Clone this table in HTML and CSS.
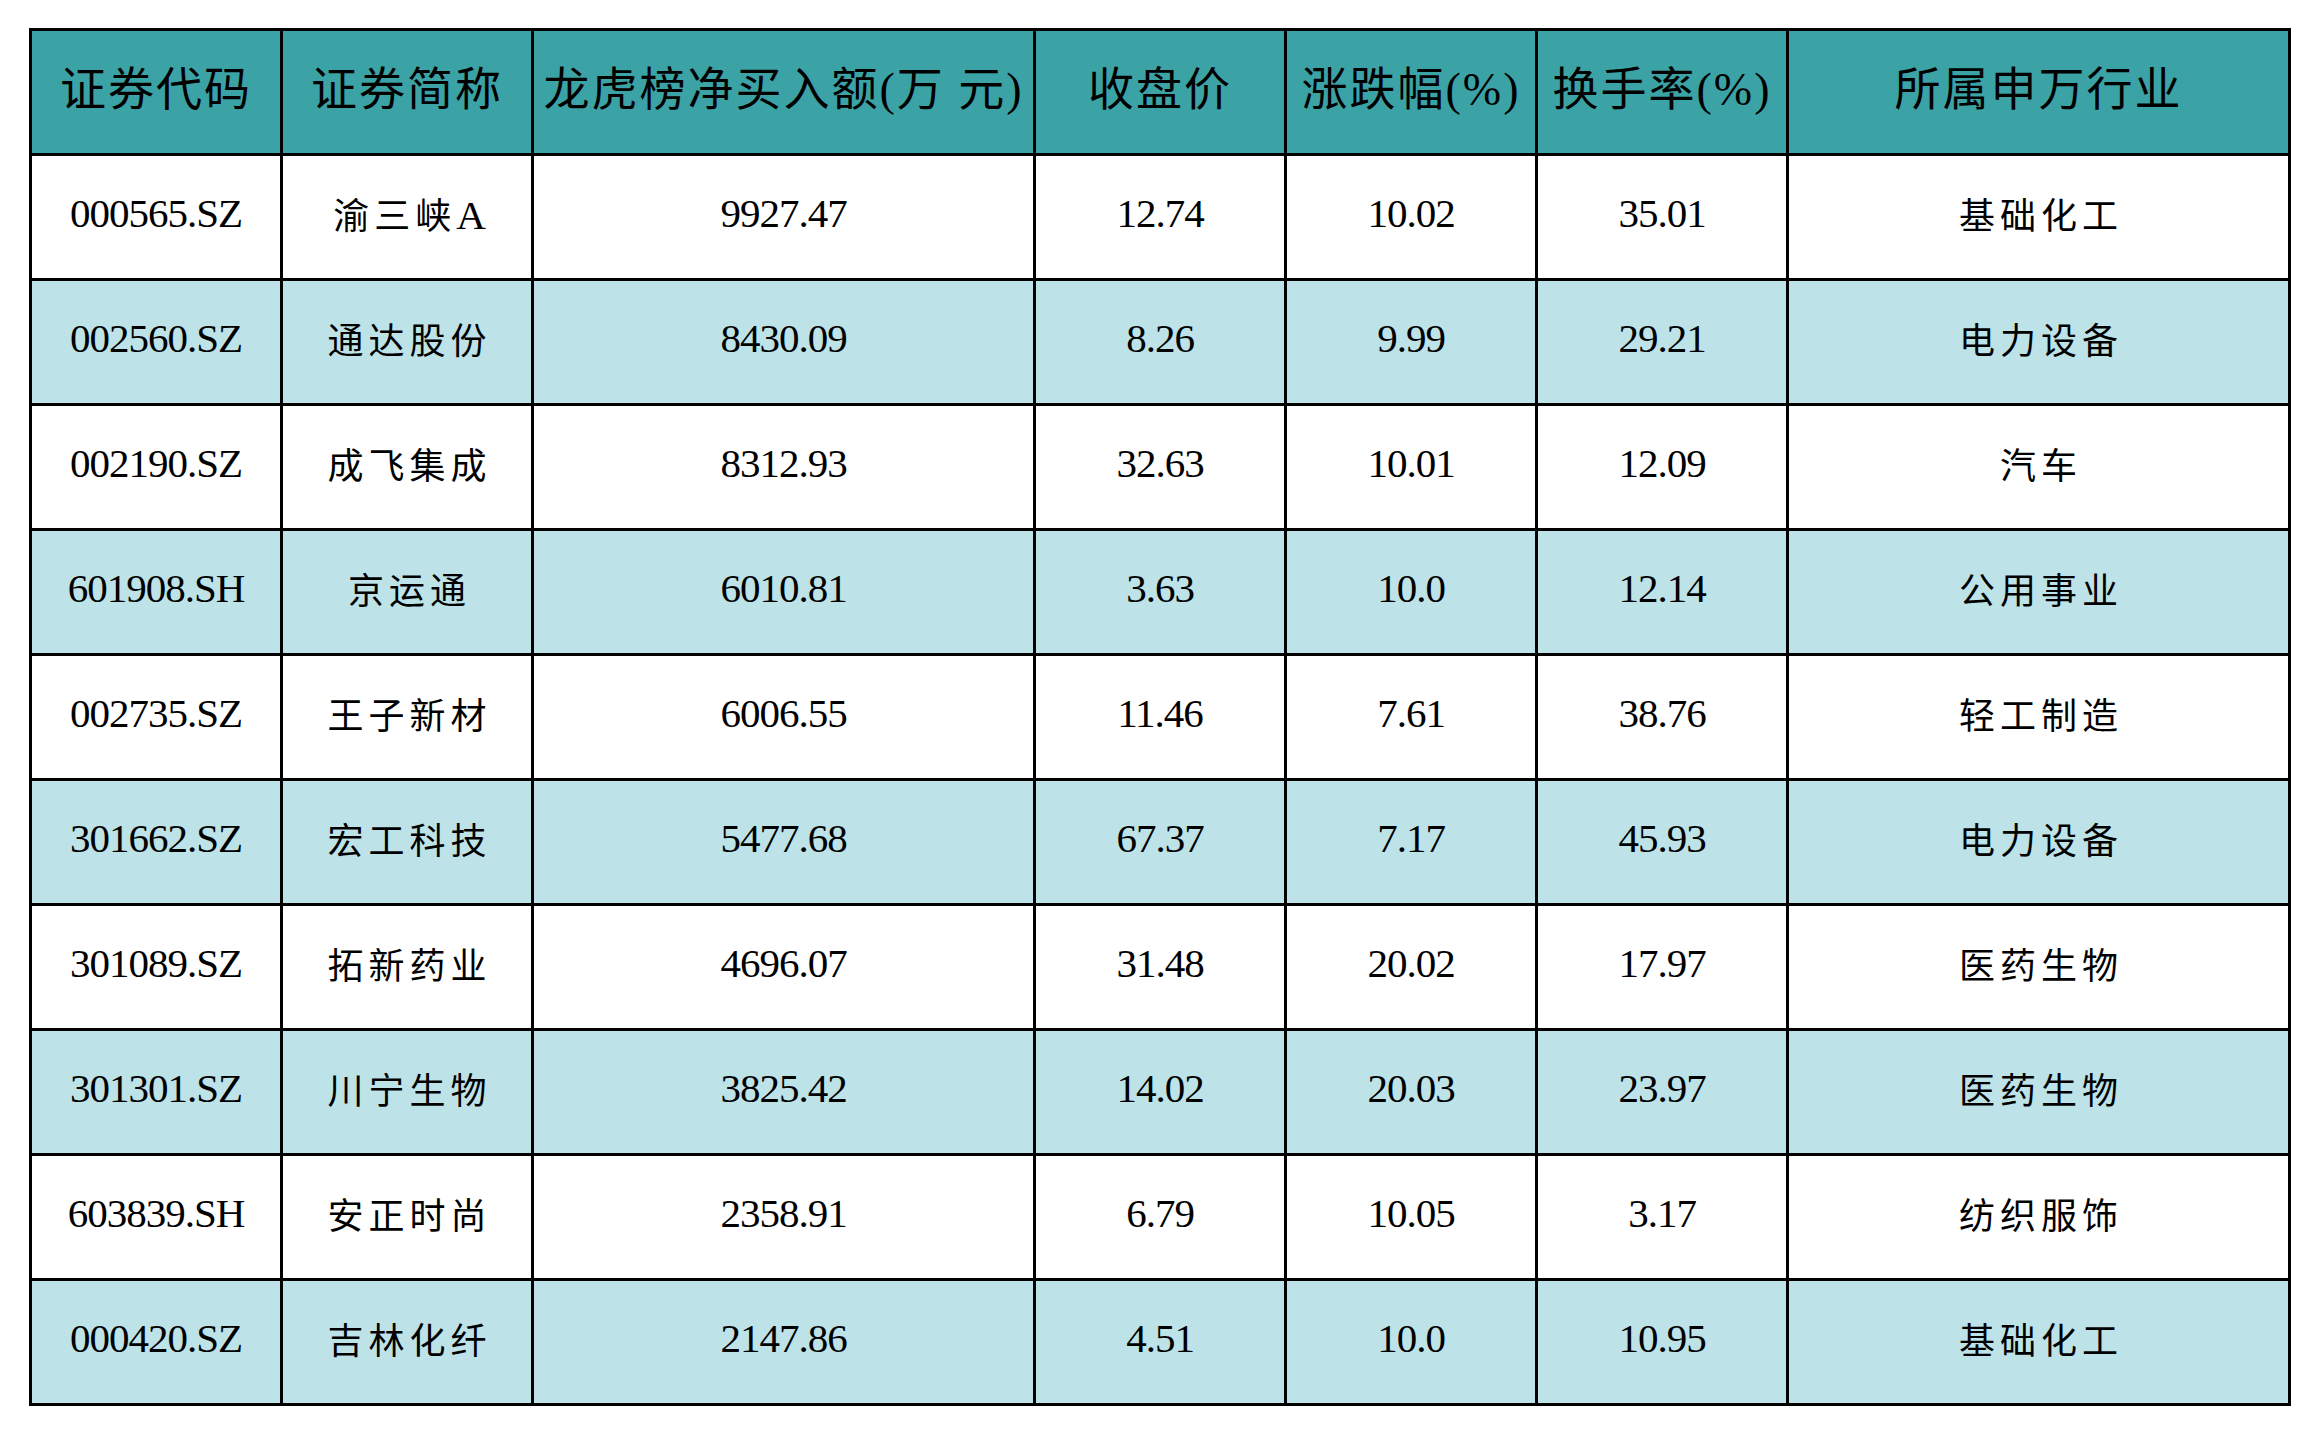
FILE: index.html
```html
<!DOCTYPE html>
<html lang="zh-CN">
<head>
<meta charset="utf-8">
<title>龙虎榜</title>
<link rel="stylesheet" href="styles.css">
</head>
<body>
<table class="grid">
  <colgroup>
    <col class="c1"><col class="c1"><col class="c2"><col class="c1"><col class="c1"><col class="c1"><col class="c2">
  </colgroup>
  <thead>
    <tr>
      <th>证券代码</th>
      <th>证券简称</th>
      <th>龙虎榜净买入额(万 元)</th>
      <th>收盘价</th>
      <th>涨跌幅(%)</th>
      <th>换手率(%)</th>
      <th>所属申万行业</th>
    </tr>
  </thead>
  <tbody>
    <tr><td>000565.SZ</td><td class="cn">渝三峡<span class="lat">A</span></td><td>9927.47</td><td>12.74</td><td>10.02</td><td>35.01</td><td class="cn">基础化工</td></tr>
    <tr class="alt"><td>002560.SZ</td><td class="cn">通达股份</td><td>8430.09</td><td>8.26</td><td>9.99</td><td>29.21</td><td class="cn">电力设备</td></tr>
    <tr><td>002190.SZ</td><td class="cn">成飞集成</td><td>8312.93</td><td>32.63</td><td>10.01</td><td>12.09</td><td class="cn">汽车</td></tr>
    <tr class="alt"><td>601908.SH</td><td class="cn">京运通</td><td>6010.81</td><td>3.63</td><td>10.0</td><td>12.14</td><td class="cn">公用事业</td></tr>
    <tr><td>002735.SZ</td><td class="cn">王子新材</td><td>6006.55</td><td>11.46</td><td>7.61</td><td>38.76</td><td class="cn">轻工制造</td></tr>
    <tr class="alt"><td>301662.SZ</td><td class="cn">宏工科技</td><td>5477.68</td><td>67.37</td><td>7.17</td><td>45.93</td><td class="cn">电力设备</td></tr>
    <tr><td>301089.SZ</td><td class="cn">拓新药业</td><td>4696.07</td><td>31.48</td><td>20.02</td><td>17.97</td><td class="cn">医药生物</td></tr>
    <tr class="alt"><td>301301.SZ</td><td class="cn">川宁生物</td><td>3825.42</td><td>14.02</td><td>20.03</td><td>23.97</td><td class="cn">医药生物</td></tr>
    <tr><td>603839.SH</td><td class="cn">安正时尚</td><td>2358.91</td><td>6.79</td><td>10.05</td><td>3.17</td><td class="cn">纺织服饰</td></tr>
    <tr class="alt"><td>000420.SZ</td><td class="cn">吉林化纤</td><td>2147.86</td><td>4.51</td><td>10.0</td><td>10.95</td><td class="cn">基础化工</td></tr>
  </tbody>
</table>
</body>
</html>
```
FILE: styles.css
```css
html, body {
  margin: 0;
  background: #ffffff;
}
body {
  padding: 28px 0 0 29px;
  font-family: "Liberation Serif", "Noto Sans CJK SC", serif;
  color: #000;
}
.grid {
  border-collapse: collapse;
  table-layout: fixed;
  width: 2262px;
}
.c1 { width: 251px; }
.c2 { width: 502px; }
.grid tr {
  height: 125px;
}
.grid th,
.grid td {
  border: 3px solid #000;
  text-align: center;
  vertical-align: middle;
  padding: 0;
  white-space: nowrap;
}
.grid th {
  background: #3ba3a6;
  font-weight: 400;
  font-size: 46px;
  letter-spacing: 2px;
  padding-bottom: 14px;
}
.grid td {
  background: #ffffff;
  font-size: 41px;
  letter-spacing: -1px;
  padding-bottom: 8px;
}
.grid tr.alt td {
  background: #bde3e9;
}
.grid td.cn {
  font-size: 36px;
  letter-spacing: 5px;
  padding-left: 5px;
}
.grid td.cn .lat {
  font-size: 41px;
  letter-spacing: 0;
}
```
